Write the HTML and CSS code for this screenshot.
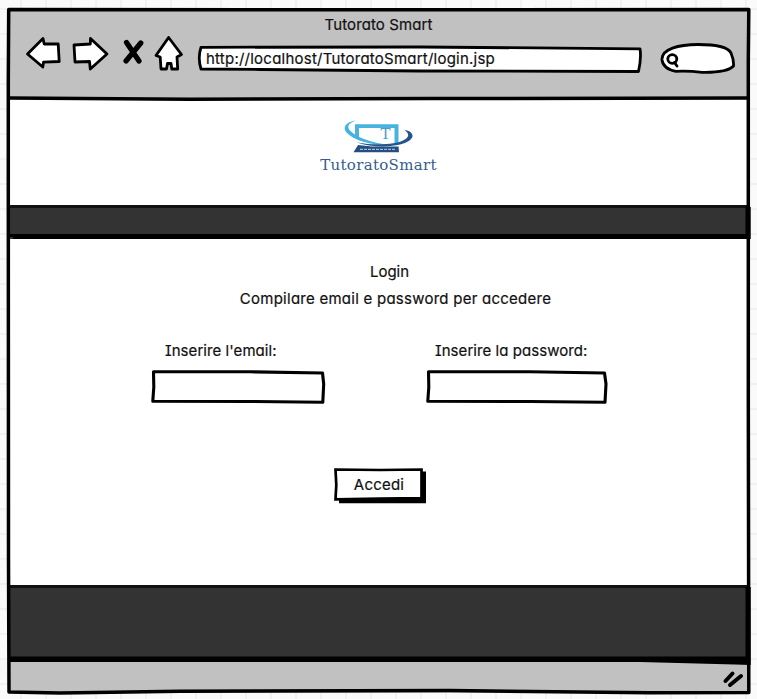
FILE: index.html
```html
<!DOCTYPE html>
<html lang="it">
<head>
<meta charset="utf-8">
<title>Tutorato Smart</title>
<link rel="stylesheet" href="styles.css">
</head>
<body>
<div class="browser">
  <header class="toolbar">
    <div class="title">Tutorato Smart</div>
    <div class="controls">
      <svg class="ink back" width="38" height="40" viewBox="24 34 38 40"><path d="M27.500 54 L43 38.500 L44.200 44 L58.200 44 L59.200 61.500 L43.500 62.200 L42.800 67 Z"/></svg>
      <svg class="ink forward" width="40" height="40" viewBox="70 34 40 40"><path d="M74 45 L90.300 44 L90.500 38.500 L107 54 L90.300 69 L89.500 61.500 L75 62 Z"/></svg>
      <svg class="stop" width="26" height="40" viewBox="120 34 26 40"><path d="M126.500 42.500 L139 61 M140.800 43 L126 61"/></svg>
      <svg class="ink home" width="34" height="40" viewBox="152 34 34 40"><path d="M168.600 37.500 L181.500 54.500 L177 57 L177.700 69 L171.800 69 L171 63.500 L167.500 63.500 L166.500 69 L161 69 L160.200 57 L156 55.500 Z"/></svg>
      <div class="address">
        <svg class="ink shape" width="448" height="40" viewBox="196 34 448 40"><path d="M201 47.300 L420 47 L640 48.800 Q641.500 58 638.500 71.500 L420 71 L260 69.500 L201 69 Q197.500 58 201 47.300 Z"/></svg>
        <span class="url">http://localhost/TutoratoSmart/login.jsp</span>
      </div>
      <svg class="ink search" width="80" height="40" viewBox="658 34 80 40"><path d="M662 60 C661 49 679 44.500 698 44.500 C716 44.500 728 47 731 53 Q734 60 733.500 66 C729 71 714 72.500 702 72.300 C691 71 684 71 676 71.300 C668 70 663 66 662 60 Z"/><ellipse cx="672.300" cy="59" rx="4.500" ry="4.300"/><path d="M674.500 62.500 L677 66"/></svg>
    </div>
  </header>
  <div class="brand">
    <svg class="logo" width="72" height="34" viewBox="343 119 72 34">
      <path d="M355 124.200 H398.500 V143 L394.500 143.500 V128 H359 V139 L355 137 Z" fill="#48b3df"/>
      <path d="M355.500 120.500 C346 122 342.500 127 346 132 C354 141 373 145.500 389 145 C374 143 356 138 349.500 130 C346.500 126 349 123 355.500 120.500 Z" fill="#45b3df"/>
      <path d="M404.500 130 C412 131 415.500 136 409.500 140.500 C398 148 373 148 357 142.500 C374 145.500 395 145 404 140 C410 137 409 133 404.500 130 Z" fill="#24558d"/>
      <path d="M358 145 L372 146.500 H398.500 L399 152.200 H353.500 Z" fill="#244f83"/>
      <path d="M360 149.300 H395" stroke="#c5d5e4" stroke-width="1" stroke-dasharray="3 1"/>
      <text class="monogram" x="385.500" y="139">T</text>
    </svg>
    <div class="brand-name">TutoratoSmart</div>
  </div>
  <nav class="nav"></nav>
  <main class="login">
    <h1>Login</h1>
    <p class="hint">Compilare email e password per accedere</p>
    <form class="form">
      <div class="fields">
        <div class="field email">
          <label>Inserire l'email:</label>
          <svg class="ink box" width="178" height="38" viewBox="149 369 178 38"><path d="M153.500 371.800 L250 371.800 L322.500 373 L323.700 384 L322.800 402.300 L250 401.500 L152.800 401.200 L153.800 387 Z"/></svg>
        </div>
        <div class="field password">
          <label>Inserire la password:</label>
          <svg class="ink box" width="185" height="38" viewBox="424 369 185 38"><path d="M428.500 371.800 L530 371.800 L604.500 373 L606 384 L605 402.300 L530 401.500 L427.800 401.200 L428.800 387 Z"/></svg>
        </div>
      </div>
      <div class="submit">
        <svg class="shape" width="98" height="38" viewBox="331 467 98 38"><path d="M339 471.500 H426 V503.300 H339 Z" fill="#000"/><path d="M335.500 469.500 L380 470 L421.500 469.500 L421.500 498 L380 498.500 L335.500 499.300 L336.300 485 Z" fill="#fff" stroke="#000" stroke-width="2.700"/></svg>
        <span class="submit-label">Accedi</span>
      </div>
    </form>
  </main>
  <div class="footer"></div>
  <div class="status">
    <svg class="grip" width="22" height="20" viewBox="723 669 22 20"><path d="M726.500 681 L733.500 673.500 M731 685 L742 676"/></svg>
  </div>
  <svg class="frame" width="757" height="699" viewBox="0 0 757 699">
    <path d="M8.700 9.600 L400 9.700 L748.800 9.600 L748.300 60 L748.300 400 L748.800 692.500 L650 692.800 L450 690.500 L180 691.300 L60 693 L9 692 L8.500 560 L8.300 200 L8.300 80 Z"/>
    <path d="M9 98 L190 99.300 L430 98.600 L748 98"/>
    <path class="band" d="M10 234 H745.500 V207 H750.700 V239 H13 V237 H10 Z"/>
    <path class="band" d="M10 656.500 H745.500 V587 H750.700 V665 L735 664.500 L640 662 L10 662 Z"/>
  </svg>
</div>
</body>
</html>
```

FILE: styles.css
```css
* { box-sizing: border-box; }

body {
  margin: 0;
  width: 757px;
  height: 699px;
  overflow: hidden;
  padding: 9px 0 0 8px;
  background-color: #fafafa;
  background-image:
    linear-gradient(90deg, #f1f1f1 2px, transparent 2px),
    linear-gradient(#f1f1f1 2px, transparent 2px);
  background-size: 25px 25px;
  background-position: 20px 8px;
  color: #111;
  font-family: Inter, "Liberation Sans", sans-serif;
  font-size: 15px;
  font-feature-settings: "cv11", "cv08";
  -webkit-text-stroke: 0.2px #111;
}

.browser {
  width: 741px;
  height: 684px;
  display: flex;
  flex-direction: column;
  background: #fff;
}

.frame {
  position: absolute;
  left: 0;
  top: 0;
  fill: none;
  stroke: #000;
  stroke-width: 3.5;
  stroke-linejoin: round;
  pointer-events: none;
}
.frame .band { fill: #000; stroke: none; }

.ink {
  display: block;
  flex: none;
  fill: #fff;
  stroke: #000;
  stroke-width: 2.8;
  stroke-linejoin: round;
  stroke-linecap: round;
}
.box { stroke-width: 3.1; }
.shape { position: absolute; inset: 0; }

.toolbar { height: 90px; background: #c1c1c1; }
.title {
  height: 25px;
  line-height: 31px;
  text-align: center;
  letter-spacing: 0.1px;
}
.controls { display: flex; padding-left: 16px; }
.forward { margin-left: 8px; }
.stop {
  flex: none;
  margin-left: 10px;
  fill: none;
  stroke: #000;
  stroke-width: 5.2;
  stroke-linecap: round;
}
.home { margin-left: 6px; }
.address {
  position: relative;
  width: 448px;
  height: 40px;
  margin-left: 10px;
  padding-left: 10px;
  line-height: 49px;
}
.url { position: relative; letter-spacing: 0.23px; }
.search { margin-left: 14px; }

.brand {
  height: 106px;
  padding-top: 20px;
  display: flex;
  flex-direction: column;
  align-items: center;
}
.logo { display: block; }
.monogram {
  font: 15px "DejaVu Serif", serif;
  text-anchor: middle;
  fill: #4b9dca;
  -webkit-text-stroke: 0;
}
.brand-name {
  font: 15px/24px "DejaVu Serif", serif;
  letter-spacing: 0.3px;
  color: #355d8c;
  -webkit-text-stroke: 0;
}

.nav { height: 34px; background: #333; border-top: 3px solid #111; }

.login { height: 346px; padding-top: 20px; text-align: center; }
.login h1 { margin: 0 0 0 22px; font-size: inherit; font-weight: 400; line-height: 26px; }
.hint { margin: 0 0 0 34px; line-height: 27px; letter-spacing: 0.25px; }
.form { display: flex; flex-direction: column; }
.fields { display: flex; padding: 29px 0 0 141px; gap: 97px; text-align: left; }
.field label { display: block; height: 28px; line-height: 20px; white-space: nowrap; letter-spacing: 0.06px; }
.email label { padding-left: 16px; }
.password label { padding-left: 11px; }
.submit {
  position: relative;
  width: 98px;
  height: 38px;
  margin: 60px 0 0 323px;
  line-height: 36px;
  letter-spacing: 0.2px;
}
.submit-label { position: relative; left: -1px; }

.footer { height: 76px; background: #333; border-top: 3px solid #111; }
.status {
  height: 32px;
  background: #c1c1c1;
  display: flex;
  justify-content: flex-end;
  padding: 8px 5px 0 0;
}
.grip { fill: none; stroke: #000; stroke-width: 4; stroke-linecap: round; }
```
